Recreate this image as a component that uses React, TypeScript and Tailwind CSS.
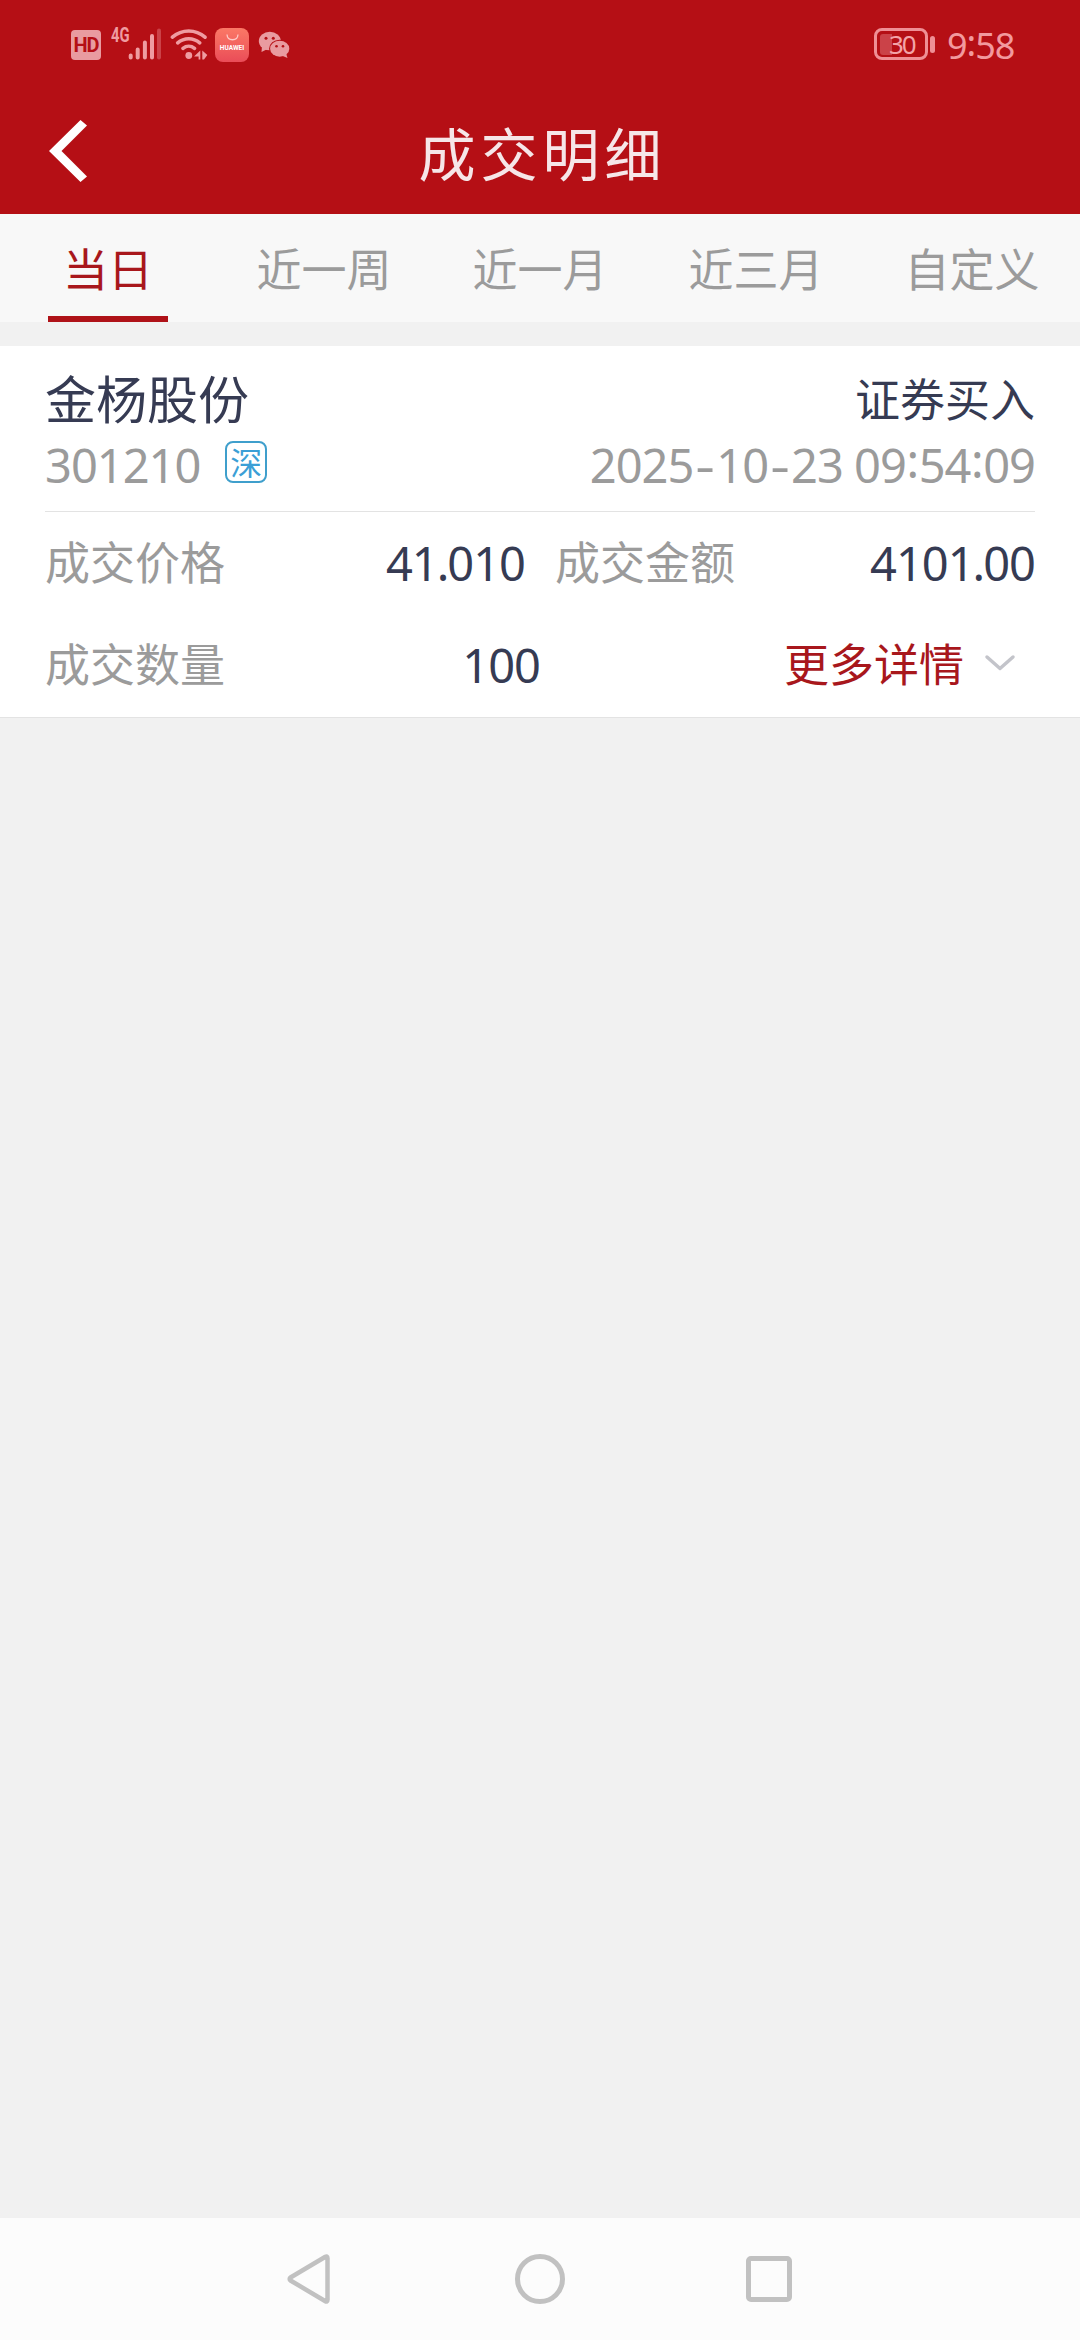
import React from "react";

const cjk = "font-['Noto_Sans_CJK_SC',sans-serif]";
const latin = "font-['Noto_Sans',sans-serif]";

const tabs = ["当日", "近一周", "近一月", "近三月", "自定义"];

function HdIcon() {
  return (
    <div className="mt-[2px] flex h-[30px] w-[30px] items-center justify-center rounded-[4px] bg-[#e99ba0]">
      <span className="font-['Roboto',sans-serif] text-[20px] leading-none font-bold tracking-[-1px] text-[#b50f15]">
        HD
      </span>
    </div>
  );
}

function SignalIcon() {
  return (
    <div className="ml-[10px] flex h-[34px] w-[51px]">
      <span className="-mt-[2px] h-[19px] w-[17px] origin-left scale-x-[0.74] font-['Roboto',sans-serif] text-[20px] leading-[19px] font-bold text-[#ef9ca1]">
        4G
      </span>
      <svg className="h-[34px] w-[34px]" viewBox="0 0 34 34" strokeWidth="4" strokeLinecap="round" stroke="#ef9ca1">
        <path d="M2.700 27.500v2M9.700 21.500v8M16.900 14.500v15M24 8v21.500" />
        <path d="M31 2.500v27" stroke="#cb4248" />
      </svg>
    </div>
  );
}

function WifiIcon() {
  return (
    <svg className="ml-[8px] h-[34px] w-[38px]" viewBox="0 0 38 34" fill="none" stroke="#ef9ca1" strokeWidth="3.600" strokeLinecap="round">
      <path d="M2.400 9.200C12 1 25.500 1 35 9.200M7.700 14.800C14.200 9.300 23.200 9.300 29.700 14.800M13 20.300C16.500 17.500 21 17.500 24.500 20.300" />
      <circle cx="18.800" cy="27.500" r="3.400" fill="#ef9ca1" stroke="none" />
      <path d="M30.300 22.500v9h-1.700v-3h-4.600zM32.300 22.500l5 4.500-3.300 4.500h-1.700z" fill="#ef9ca1" stroke="none" />
    </svg>
  );
}

function HuaweiIcon() {
  return (
    <div className="ml-[7px] flex h-[34px] w-[34px] flex-col items-center rounded-[8px] bg-linear-to-b from-[#fb7866] to-[#ea4c58]">
      <svg className="mt-[6px] h-[7px] w-[13px]" viewBox="0 0 13 7" fill="none" stroke="#ffc9c5" strokeWidth="1.300">
        <path d="M1 .5C1.500 7.500 11.500 7.500 12 .5" />
      </svg>
      <span className="mt-[4px] font-['Roboto',sans-serif] text-[6.5px] leading-[6px] font-bold text-white">HUAWEI</span>
    </div>
  );
}

function WechatIcon() {
  return (
    <svg className="ml-[9px] h-[34px] w-[33px]" viewBox="0 0 33 34">
      <ellipse cx="11.800" cy="13" rx="11" ry="9.300" fill="#e99ba0" />
      <path d="M4 18l-.5 6 6-3z" fill="#e99ba0" />
      <ellipse cx="21.700" cy="20.700" rx="10.600" ry="9" fill="#b50f15" />
      <ellipse cx="21.700" cy="20.700" rx="9.600" ry="8" fill="#e99ba0" />
      <path d="M28 25l1.500 5-6-2.500z" fill="#e99ba0" />
      <g fill="#b50f15">
        <circle cx="8" cy="10.300" r="1.500" />
        <circle cx="15.300" cy="10.300" r="1.500" />
        <circle cx="18.500" cy="18.300" r="1.300" />
        <circle cx="25" cy="18.300" r="1.300" />
      </g>
    </svg>
  );
}

function StatusBar() {
  return (
    <div className="flex h-[90px] items-start pt-[28px] pr-[66px] pl-[71px]">
      <HdIcon />
      <SignalIcon />
      <WifiIcon />
      <HuaweiIcon />
      <WechatIcon />
      <div className="ml-auto flex items-start">
        <div className="flex h-[32px] w-[54px] items-center rounded-[8px] border-[3px] border-[#ef8f95] pl-[3px]">
          <div className="h-[21px] w-[12px] rounded-l-[3px] bg-[#cb4248]" />
          <span className="-ml-[3px] font-['Noto_Sans',sans-serif] text-[26px] leading-none tracking-[-2px] text-[#f3a3a8]">30</span>
        </div>
        <div className="mt-[8px] ml-[2px] h-[17px] w-[5px] rounded-full bg-[#ef8f95]" />
        <div className="mt-[2px] ml-[12px] flex h-[32px] w-[67px] items-center font-['Noto_Sans',sans-serif] text-[36px] leading-[32px] tracking-[-1px] text-[#f2999e]">
          <span>9</span>
          <span className="relative -top-[3px]">:</span>
          <span>58</span>
        </div>
      </div>
    </div>
  );
}

function TitleBar() {
  return (
    <div className="grid h-[124px] grid-cols-[1fr_auto_1fr] items-start">
      <svg className="mt-[30px] ml-[49px] h-[62px] w-[38px]" viewBox="0 0 38 62">
        <path d="M31.500 0L38 5.500 12.500 31 38 56.500 31.500 62 0 31z" fill="#fff" />
      </svg>
      <h1 className="mt-[31px] pl-[5px] font-['Noto_Sans_CJK_SC',sans-serif] text-[57px] leading-[60px] tracking-[5px] text-[#f6e6e8]">
        成交明细
      </h1>
    </div>
  );
}

function TabBar() {
  return (
    <nav className={`grid h-[108px] grid-cols-5 bg-[#f8f8f8] text-[45px] ${cjk}`}>
      {tabs.map((tab, i) => (
        <div key={tab} className={`flex flex-col items-center ${i === 0 ? "text-[#a8171c]" : "text-[#9b9b9b]"}`}>
          <span className="h-[102px] pt-[5px] leading-[98px]">{tab}</span>
          {i === 0 && <div className="h-[6px] w-[120px] bg-[#af1218]" />}
        </div>
      ))}
    </nav>
  );
}

function Hyphen() {
  return <span className="inline-block w-[23px] scale-x-[1.300] text-center">-</span>;
}

function Colon() {
  return <span className="relative -top-[5px] mx-[0.6px]">:</span>;
}

function Point() {
  return <span className="-mx-[1px]">.</span>;
}

function TradeCard() {
  return (
    <section className={`flex h-[372px] flex-col border-b border-[#e3e3e3] bg-white px-[45px] pt-[20px] text-[45px] ${cjk}`}>
      <div className="flex h-[63px] items-center justify-between text-[#363b53]">
        <span className="text-[51px] leading-[63px]">金杨股份</span>
        <span className="leading-[63px]">证券买入</span>
      </div>
      <div className="flex h-[83px] items-start justify-between border-b border-[#e3e3e3] text-[#9b9b9b]">
        <div className="flex items-start">
          <span className={`pt-[2px] text-[47px] leading-[68px] tracking-[-1px] ${latin}`}>301210</span>
          <span className="mt-[12px] ml-[25px] flex h-[42px] w-[42px] items-center justify-center rounded-[8px] border-2 border-[#3f9fcc] pb-[2px] text-[32px] leading-[36px] text-[#3b9fd6]">
            深
          </span>
        </div>
        <span className={`pt-[2px] text-[47px] leading-[68px] tracking-[-1px] whitespace-pre ${latin}`}>
          2025<Hyphen />10<Hyphen />23 09<Colon />54<Colon />09
        </span>
      </div>
      <div className="flex h-[97px] items-start text-[#9b9b9b]">
        <span className="w-[180px] leading-[97px]">成交价格</span>
        <span className={`w-[300px] pt-[3px] text-right text-[47px] leading-[97px] tracking-[-1px] text-[#363b53] ${latin}`}>
          41<Point />010
        </span>
        <span className="ml-[30px] leading-[97px]">成交金额</span>
        <span className={`ml-auto pt-[3px] text-[47px] leading-[97px] tracking-[-1px] text-[#363b53] ${latin}`}>
          4101<Point />00
        </span>
      </div>
      <div className="flex h-[106px] items-start text-[#9b9b9b]">
        <span className="w-[180px] leading-[107px]">成交数量</span>
        <span className={`w-[315px] pt-[3px] text-right text-[47px] leading-[107px] tracking-[-1px] text-[#363b53] ${latin}`}>100</span>
        <span className="ml-auto leading-[107px] text-[#a8171c]">更多详情</span>
        <svg className="mt-[45px] mr-[19px] ml-[20px] h-[18px] w-[32px]" viewBox="0 0 32 18" fill="none" stroke="#c3c4ca" strokeWidth="3.500" strokeLinecap="round" strokeLinejoin="round">
          <path d="M3 3l13 11.500L29 3" />
        </svg>
      </div>
    </section>
  );
}

function NavigationBar() {
  return (
    <footer className="flex h-[122px] items-start bg-[#fcfcfc] pt-[36px] pl-[287px]">
      <svg className="h-[50px] w-[43px]" viewBox="0 0 43 50" fill="none" stroke="#c1c1c1" strokeWidth="4.500" strokeLinejoin="round">
        <path d="M40.500 4.200Q40.500 1.500 38 3L3.500 23.500Q1.800 25 3.500 26.500L38 47Q40.500 48.500 40.500 45.800z" />
      </svg>
      <div className="ml-[185px] h-[50px] w-[50px] rounded-full border-[5px] border-[#c1c1c1]" />
      <div className="mt-[2px] ml-[181px] h-[46px] w-[46px] rounded-[5px] border-[5px] border-[#c1c1c1]" />
    </footer>
  );
}

export default function App() {
  return (
    <div className="flex h-[2340px] w-[1080px] flex-col overflow-hidden bg-[#f1f1f1]">
      <header className="h-[214px] bg-[#b50f15]">
        <StatusBar />
        <TitleBar />
      </header>
      <TabBar />
      <main className="flex-1 pt-[24px]">
        <TradeCard />
      </main>
      <NavigationBar />
    </div>
  );
}
